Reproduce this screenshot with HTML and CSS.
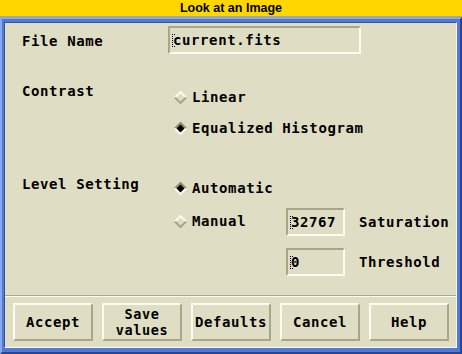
FILE: index.html
```html
<!DOCTYPE html>
<html>
<head>
<meta charset="utf-8">
<title>Look at an Image</title>
<link rel="stylesheet" href="styles.css">
</head>
<body>
<div class="titlebar">Look at an Image</div>
<div class="frame">
  <div class="frame-mid">
    <div class="content">
      <div class="form">
        <div class="row r1">
          <div class="label l-file">File Name</div>
          <div class="entry entry-wide"><span class="cursor"></span>current.fits</div>
        </div>
        <div class="row r2">
          <div class="label l-top">Contrast</div>
          <div class="radio">
            <svg class="diamond" width="13" height="13" viewBox="0 0 13 13"><polyline points="1,6.5 6.5,1 12,6.5" fill="none" stroke="#fbfbf0" stroke-width="2"/><polyline points="1,6.5 6.5,12 12,6.5" fill="none" stroke="#a8a688" stroke-width="2"/></svg>
            <span>Linear</span>
          </div>
        </div>
        <div class="row r3">
          <div class="label"></div>
          <div class="radio">
            <svg class="diamond" width="13" height="13" viewBox="0 0 13 13"><polygon points="6.5,2 11,6.5 6.5,11 2,6.5" fill="#000"/><polyline points="1,6.5 6.5,1 12,6.5" fill="none" stroke="#8e8c6c" stroke-width="2"/><polyline points="1,6.5 6.5,12 12,6.5" fill="none" stroke="#fbfbf0" stroke-width="2"/></svg>
            <span>Equalized Histogram</span>
          </div>
        </div>
        <div class="row r4">
          <div class="label l-level">Level Setting</div>
          <div class="radio">
            <svg class="diamond" width="13" height="13" viewBox="0 0 13 13"><polygon points="6.5,2 11,6.5 6.5,11 2,6.5" fill="#000"/><polyline points="1,6.5 6.5,1 12,6.5" fill="none" stroke="#8e8c6c" stroke-width="2"/><polyline points="1,6.5 6.5,12 12,6.5" fill="none" stroke="#fbfbf0" stroke-width="2"/></svg>
            <span>Automatic</span>
          </div>
        </div>
        <div class="row r5">
          <div class="label"></div>
          <div class="radio radio-manual">
            <svg class="diamond" width="13" height="13" viewBox="0 0 13 13"><polyline points="1,6.5 6.5,1 12,6.5" fill="none" stroke="#fbfbf0" stroke-width="2"/><polyline points="1,6.5 6.5,12 12,6.5" fill="none" stroke="#a8a688" stroke-width="2"/></svg>
            <span>Manual</span>
          </div>
          <div class="entry entry-small"><span class="cursor"></span>32767</div>
          <div class="side-label">Saturation</div>
        </div>
        <div class="row r6">
          <div class="label"></div>
          <div></div>
          <div class="entry entry-small"><span class="cursor"></span>0</div>
          <div class="side-label">Threshold</div>
        </div>
      </div>
      <div class="separator"></div>
      <div class="buttons">
        <div class="btn">Accept</div>
        <div class="btn btn-two">Save<br>values</div>
        <div class="btn">Defaults</div>
        <div class="btn">Cancel</div>
        <div class="btn">Help</div>
      </div>
    </div>
  </div>
</div>
</body>
</html>
```
FILE: styles.css
```css
html, body {
  margin: 0;
  padding: 0;
}
body {
  width: 462px;
  height: 354px;
  display: flex;
  flex-direction: column;
  background: #dfddc3;
  font-family: "DejaVu Sans Mono", "Liberation Mono", monospace;
  font-weight: bold;
  font-size: 14px;
  letter-spacing: 0.6px;
  color: #000;
  overflow: hidden;
}
.titlebar {
  height: 16px;
  line-height: 17px;
  background: #ffd700;
  border-bottom: 1px solid #b9a860;
  text-align: center;
  font-family: "Liberation Sans", Arial, sans-serif;
  font-size: 12.5px;
  letter-spacing: 0;
  font-weight: bold;
}
.frame {
  flex: 1;
  display: flex;
  border-style: solid;
  border-width: 2px;
  border-color: #88a9ee #264592 #264592 #88a9ee;
}
.frame-mid {
  flex: 1;
  display: flex;
  border-style: solid;
  border-width: 3px 3px 4px 2px;
  border-color: #5279d6;
}
.content {
  flex: 1;
  display: flex;
  flex-direction: column;
  background: #dfddc3;
  border-style: solid;
  border-width: 1px;
  border-color: #34529e #f6f6ea #f6f6ea #34529e;
}
.form {
  flex: 1;
  padding: 3px 0 0 17px;
  display: flex;
  flex-direction: column;
}
.row {
  display: grid;
  grid-template-columns: 146px 118px 59px auto;
  align-items: center;
}
.r1 { height: 28px; }
.r2 { height: 26px; margin-top: 30px; }
.r3 { height: 20px; margin-top: 8px; }
.r4 { height: 24px; margin-top: 38px; }
.r5 { height: 28px; margin-top: 8px; }
.r6 { height: 28px; margin-top: 12px; }
.label {
  line-height: 14px;
  align-self: start;
  white-space: nowrap;
}
.l-file { margin-top: 8px; }
.l-level { margin-top: 1px; }
.radio {
  display: flex;
  align-items: center;
  gap: 5px;
  padding-left: 6px;
  line-height: 14px;
  white-space: nowrap;
}
.radio-manual {
  align-self: start;
  margin-top: 6px;
}
.diamond {
  display: block;
  flex: none;
}
.entry {
  box-sizing: border-box;
  height: 28px;
  line-height: 24px;
  border-style: solid;
  border-width: 2px;
  border-color: #a8a688 #fbfbf0 #fbfbf0 #a8a688;
  padding-left: 3px;
  display: flex;
  align-items: center;
  white-space: nowrap;
}
.entry-wide {
  grid-column: 2 / 5;
  width: 193px;
}
.entry-small {
  width: 59px;
}
.cursor {
  display: inline-block;
  width: 3px;
  height: 13px;
  margin-right: -2px;
  margin-left: -1px;
  box-sizing: border-box;
  border-left: 1px dotted #000;
  border-top: 1px dotted #000;
  border-bottom: 1px dotted #000;
  flex: none;
}
.side-label {
  padding-left: 14px;
  line-height: 14px;
  white-space: nowrap;
}
.separator {
  height: 0;
  border-top: 1px solid #a8a688;
  border-bottom: 1px solid #fbfbf0;
}
.buttons {
  display: flex;
  gap: 9px;
  padding: 6px 0 6px 8px;
}
.btn {
  box-sizing: border-box;
  width: 80px;
  height: 38px;
  border-style: solid;
  border-width: 2px;
  border-color: #fbfbf0 #a8a688 #a8a688 #fbfbf0;
  display: flex;
  align-items: center;
  justify-content: center;
  text-align: center;
  line-height: 14px;
}
.btn-two {
  line-height: 16px;
  font-size: 13.5px;
}
```
